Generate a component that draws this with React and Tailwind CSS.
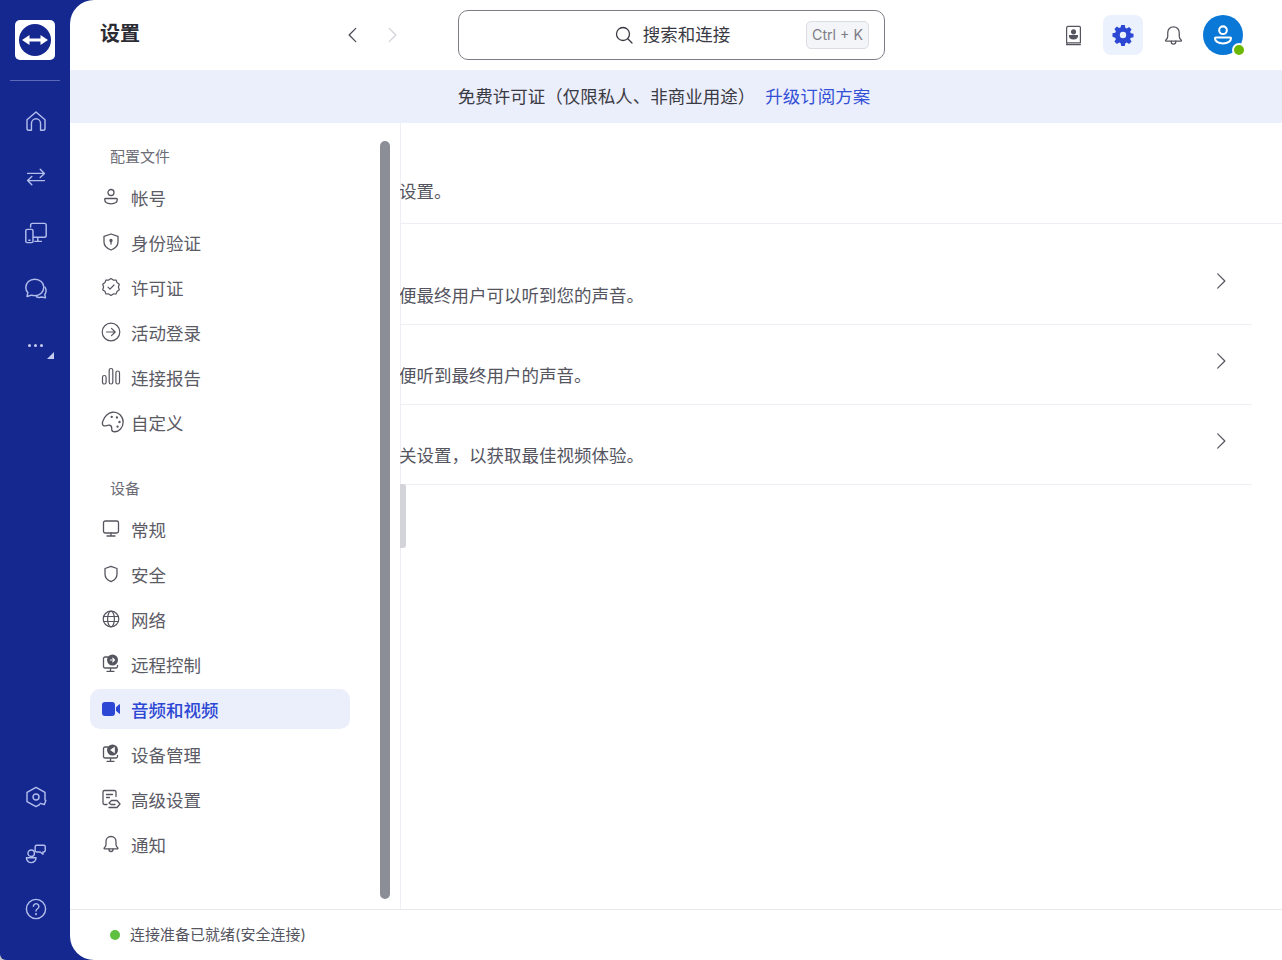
import React from "react";

const S = ({ size = 20, children, sw = 1.4, className = "" }) => (
  <svg width={size} height={size} viewBox="0 0 20 20" fill="none" stroke="currentColor" strokeWidth={sw} strokeLinecap="round" strokeLinejoin="round" className={className}>
    {children}
  </svg>
);

const Logo = () => (
  <svg width="40" height="40" viewBox="0 0 40 40">
    <rect width="40" height="40" rx="5" fill="#fff" />
    <circle cx="20" cy="20" r="16" fill="#14288f" />
    <path d="M7 20 14.500 15V18.600H25.500V15L33 20 25.500 25V21.400H14.500V25Z" fill="#fff" />
  </svg>
);

const railTop = [
  <S size={24} sw={1.2}><path d="M2.500 9 10 2.500 17.500 9v7.200a1.500 1.500 0 0 1-1.500 1.500h-2.200V12a3.800 3.800 0 0 0-7.600 0v5.700H4a1.500 1.500 0 0 1-1.500-1.500Z" /></S>,
  <S size={24} sw={1.2}><path d="M3 7h14M13.500 3.500 17 7l-3.500 3.500M17 13H3M6.500 9.500 3 13l3.500 3.500" /></S>,
  <S size={24} sw={1.2}><path d="M5.500 5V3.500A1.500 1.500 0 0 1 7 2h10a1.500 1.500 0 0 1 1.500 1.500V12a1.500 1.500 0 0 1-1.500 1.500H8M11.500 13.500V17M9 17h5.500" /><rect x="1.500" y="7" width="6" height="11" rx="1.200" /><path d="M4 16h1" /></S>,
  <S size={24} sw={1.2}><path d="M9 1.800c-4.200 0-7.500 3-7.500 6.900 0 1.700.7 3.200 1.700 4.300L2.500 16.300l3.800-1.200c.8.300 1.700.4 2.700.4 4.200 0 7.500-3 7.500-6.900S13.200 1.800 9 1.800Z" /><path d="M17.500 8.500c.6.900.9 1.900.9 3 0 1.200-.4 2.200-1.100 3.100l.6 2.800-3.200-.7c-1.400.5-3.200.4-4.500-.4" /></S>,
];

const railBottom = [
  <S size={24} sw={1.2}><path d="M17.500 12.500V6.200L10 2 2.500 6.200v7.600L10 18l3-1.700" /><circle cx="10" cy="10" r="2.500" /><path d="M18.200 12.800 17 16.300l-3.500-1" /></S>,
  <S size={24} sw={1.2}><circle cx="6" cy="10.200" r="2.700" /><path d="M2 14h8a4 4 0 0 1-8 0Z" /><path d="M10.500 3.500h6a1.200 1.200 0 0 1 1.200 1.200v3.300a1.200 1.200 0 0 1-1.200 1.200h-.700V11l-2.300-1.800h-3a1.200 1.200 0 0 1-1.200-1.200V4.700a1.200 1.200 0 0 1 1.200-1.200Z" /></S>,
  <S size={24} sw={1.2}><circle cx="10" cy="10" r="8" /><path d="M7.800 7.800a2.300 2.300 0 1 1 3.500 2c-.800.500-1.300 1-1.300 1.900" /><circle cx="10" cy="14.300" r=".3" /></S>,
];

const I = {
  user: <S sw={1.3}><circle cx="10" cy="5.500" r="3" /><path d="M4.500 11.500h11a.8.8 0 0 1 .8.800c0 2.500-2 4.500-6.300 4.500s-6.300-2-6.300-4.500a.8.8 0 0 1 .8-.8Z" /></S>,
  shieldLock: <S sw={1.3}><path d="M10 2 17 4.300v5.700c0 3.700-2.900 6.400-7 8-4.100-1.600-7-4.300-7-8V4.300Z" /><circle cx="10" cy="8.500" r="1" fill="currentColor" /><path d="M10 9.500v2.500" /></S>,
  badge: <S sw={1.2}><path d="m10 1.500 2.300 1.600 2.800-.1.900 2.600 2.300 1.700-.9 2.700.9 2.700-2.300 1.700-.9 2.600-2.800-.1L10 18.500l-2.300-1.600-2.800.1-.9-2.600-2.300-1.700.9-2.700-.9-2.700L4 5.600l.9-2.600 2.800.1Z" /><path d="m7 10.200 2 2 4-4.200" /></S>,
  arrowCircle: <S sw={1.2}><circle cx="10" cy="10" r="8.800" /><path d="M5.500 10h8.500M10.500 6.300l3.700 3.700-3.700 3.700" /></S>,
  bars: <S sw={1.2}><rect x="1.500" y="8.500" width="3.600" height="8.500" rx="1.800" /><rect x="8.200" y="1.500" width="3.600" height="15.500" rx="1.800" /><rect x="14.900" y="4" width="3.600" height="13" rx="1.800" /></S>,
  palette: <S size={26} sw={1} className="flex-none translate-x-[2px]"><path d="M9.500 2.500c4.700-.5 8.300 3.200 8.300 7.500s-3.200 7.500-6.500 7.500c-1.800 0-2.300-1-2.300-2 0-1.400.3-2.700-1.500-3-1.700-.3-3 .7-4.500.5C1.800 12.700 1.500 11 2.300 9c1-3 3.800-6.100 7.200-6.500Z" /><circle cx="9" cy="6" r=".4" fill="currentColor" /><circle cx="13" cy="6.500" r=".4" fill="currentColor" /><circle cx="15" cy="10" r=".4" fill="currentColor" /><circle cx="13.500" cy="13.500" r=".4" fill="currentColor" /></S>,
  monitor: <S sw={1.3}><rect x="2.500" y="2" width="15" height="12" rx="1.800" /><path d="M10 14v3M6 17h8" /></S>,
  shield: <S sw={1.3}><path d="M10 2.300 16 4.500v5.500c0 3.500-2.500 6.200-6 7.700-3.500-1.500-6-4.200-6-7.700V4.500Z" /></S>,
  globe: <S sw={1.2}><circle cx="10" cy="10" r="7.800" /><ellipse cx="10" cy="10" rx="3.400" ry="7.800" /><path d="M2.500 7.500h15M2.500 12.500h15" /></S>,
  remote: <S sw={1.3}><path d="M7 3H4a1.500 1.500 0 0 0-1.500 1.500v8A1.500 1.500 0 0 0 4 14h11a1.500 1.500 0 0 0 1.500-1.500v-1M9.500 14v3M6 17.300h7" /><circle cx="11.500" cy="6" r="5.500" fill="currentColor" stroke="none" /><path d="M9.300 6h4M11.700 4.200 13.500 6l-1.800 1.800" stroke="#fff" strokeWidth="1.100" /></S>,
  manage: <S sw={1.3}><path d="M7 3H4a1.500 1.500 0 0 0-1.500 1.500v8A1.500 1.500 0 0 0 4 14h11a1.500 1.500 0 0 0 1.500-1.500v-1M9.500 14v3M6 17.300h7" /><circle cx="11.500" cy="6" r="5.500" fill="currentColor" stroke="none" /><path d="M13.200 3.500 9.600 6l3.600 2.500Z" fill="#fff" stroke="#fff" strokeWidth=".8" /></S>,
  advanced: <S sw={1.3}><path d="M15 7.500V3A1.500 1.500 0 0 0 13.500 1.500H3.500A1.500 1.500 0 0 0 2 3v11a1.500 1.500 0 0 0 1.500 1.500H6M5.500 5.500h6M5.500 8.500h3" /><path d="M8 18.500h8l3-3.500-3-3.500h-5.500L8 14l2 1.500h4" /></S>,
  bell: <S sw={1.3}><path d="M10 2.500c-3 0-5 2.200-5 5v3.300c0 1.200-.8 2.300-1.800 3.200-.3.300-.1.800.3.800h13c.4 0 .6-.5.300-.8-1-.9-1.800-2-1.800-3.200V7.500c0-2.800-2-5-5-5Z" /><path d="M8 15v.5a2 2 0 0 0 4 0V15" /></S>,
  video: (
    <svg width="20" height="20" viewBox="0 0 20 20" fill="currentColor">
      <rect x="1" y="3" width="13" height="14" rx="3" />
      <path d="M15 8.200 18.300 5.300c.3-.3.700 0 .7.300v8.800c0 .4-.4.600-.7.300L15 11.800Z" />
    </svg>
  ),
};

const profile = [
  ["帐号", I.user],
  ["身份验证", I.shieldLock],
  ["许可证", I.badge],
  ["活动登录", I.arrowCircle],
  ["连接报告", I.bars],
  ["自定义", I.palette],
];
const device = [
  ["常规", I.monitor],
  ["安全", I.shield],
  ["网络", I.globe],
  ["远程控制", I.remote],
  ["音频和视频", I.video, true],
  ["设备管理", I.manage],
  ["高级设置", I.advanced],
  ["通知", I.bell],
];

const NavItem = ({ label, icon, active }) => (
  <div className={`flex h-[40px] mb-[5px] items-center rounded-[10px] pl-[11px] text-[17.5px] ${active ? "bg-[#ebeefb] font-medium text-[#2b47d4]" : "text-[#5b5b66]"}`}>
    <span className={`flex h-[20px] w-[20px] flex-none items-center justify-center ${active ? "text-[#2b47d4]" : "text-[#55555f]"}`}>{icon}</span>
    <span className="ml-[10px] mt-[4px]">{label}</span>
  </div>
);

const Row = ({ text }) => (
  <div className="mr-[30px] flex h-[80px] justify-between border-b border-[#eeeef4]">
    <div className="-ml-[1px] self-end whitespace-nowrap pb-[16px] text-[17.5px] leading-[24px] text-[#55555f]">{text}</div>
    <div className="mr-[20px] mt-[25px] text-[#55555f]">
      <S size={22} sw={1.1}><path d="M7 3.500 13.500 10 7 16.500" /></S>
    </div>
  </div>
);

export default function App() {
  return (
    <div className="h-[960px] w-[1282px] bg-[#c9c9c9]">
      <div className="flex h-[960px] w-[1282px] overflow-hidden rounded-bl-[6px] bg-[#14288f] font-['Inter','Noto_Sans_CJK_SC',sans-serif]">
        <aside className="flex w-[70px] flex-none flex-col items-center text-[#b3bdec]">
          <div className="mt-[20px]"><Logo /></div>
          <div className="mt-[20px] h-px w-[50px] bg-[#5b69b8]" />
          <div className="mt-[12px] flex flex-col">
            {railTop.map((ic, i) => (
              <div key={i} className="flex h-[56px] w-[70px] items-center justify-center pl-[1px]">{ic}</div>
            ))}
            <div className="relative flex h-[56px] w-[70px] items-center justify-center">
              <div className="flex gap-[3px]">
                <span className="h-[3px] w-[3px] rounded-full bg-[#c4ccf0]" />
                <span className="h-[3px] w-[3px] rounded-full bg-[#c4ccf0]" />
                <span className="h-[3px] w-[3px] rounded-full bg-[#c4ccf0]" />
              </div>
              <svg className="absolute left-[47px] top-[35px]" width="7" height="7" viewBox="0 0 7 7"><path d="M7 0v7H0Z" fill="#c4ccf0" /></svg>
            </div>
          </div>
          <div className="mb-[23px] mt-auto flex flex-col">
            {railBottom.map((ic, i) => (
              <div key={i} className="flex h-[56px] w-[70px] items-center justify-center pl-[1px]">{ic}</div>
            ))}
          </div>
        </aside>

        <main className="flex min-w-0 flex-1 flex-col overflow-hidden rounded-l-[24px] bg-white">
          <header className="flex h-[70px] flex-none items-center">
            <div className="-mt-[2px] ml-[30px] w-[232px] text-[20px] font-bold text-[#2b2b33]">设置</div>
            <div className="flex h-[40px] w-[40px] items-center justify-center pl-[1px] text-[#4e4e58]">
              <S size={22} sw={1.200}><path d="M12.500 4 6.500 10l6 6" /></S>
            </div>
            <div className="flex h-[40px] w-[40px] items-center justify-center text-[#d3d4da]">
              <S size={22} sw={1.200}><path d="M7.500 4l6 6-6 6" /></S>
            </div>
            <div className="relative ml-[46px] flex h-[50px] w-[427px] items-center justify-center rounded-[10px] border border-[#7d7d87] text-[#3a3a44]">
              <div className="flex items-center pl-[1px]">
                <S size={20} sw={1.300}><circle cx="9" cy="9" r="6.500" /><path d="m14 14 4 4" /></S>
                <span className="ml-[9px] text-[17.5px]">搜索和连接</span>
              </div>
              <div className="absolute right-[15px] top-[10px] flex h-[28px] w-[63px] items-center justify-center rounded-[5px] border border-[#dcdde3] bg-[#f4f5f8] text-[14.2px] text-[#7d7d87]">Ctrl + K</div>
            </div>
            <div className="ml-auto mr-[39px] flex items-center gap-[10px]">
              <div className="flex h-[40px] w-[40px] items-center justify-center text-[#55555f]">
                <S size={23} sw={1.050}><path d="M4 16V3.500A1.500 1.500 0 0 1 5.500 2H15a1 1 0 0 1 1 1v13.500H5.200A1.300 1.300 0 0 0 4 18h12" /><circle cx="10" cy="6.800" r="1.700" fill="currentColor" /><path d="M6.500 10h7c0 2-1.300 3-3.500 3s-3.500-1-3.500-3Z" fill="currentColor" /></S>
              </div>
              <div className="flex h-[40px] w-[40px] items-center justify-center rounded-[8px] bg-[#ebf2fd] text-[#2b47d4]">
                <svg width="22" height="22" viewBox="0 0 22 22"><path fillRule="evenodd" fill="currentColor" d="M9.200 1h3.600l.5 2.700 1.500.7 2.300-1.500 2.500 2.500-1.500 2.300.7 1.500 2.700.5v3.600l-2.700.5-.7 1.500 1.500 2.300-2.500 2.500-2.300-1.500-1.500.7-.5 2.700H9.200l-.5-2.700-1.500-.7-2.300 1.500-2.500-2.500 1.500-2.300-.7-1.500L.5 12.800V9.200l2.700-.5.700-1.500-1.500-2.300 2.500-2.500 2.300 1.500 1.500-.7ZM11 7.800a3.200 3.200 0 1 0 0 6.400 3.200 3.200 0 0 0 0-6.400Z" /></svg>
              </div>
              <div className="flex h-[40px] w-[40px] items-center justify-center text-[#55555f]">
                <S size={23} sw={1.100}><path d="M10 2.500c-3 0-5 2.200-5 5v3.300c0 1.200-.8 2.300-1.800 3.200-.3.300-.1.800.3.800h13c.4 0 .6-.5.300-.8-1-.9-1.800-2-1.800-3.200V7.500c0-2.800-2-5-5-5Z" /><path d="M8 15v.5a2 2 0 0 0 4 0V15" /></S>
              </div>
              <div className="relative flex h-[40px] w-[40px] items-center justify-center rounded-full bg-[#0a78d6] text-white">
                <S size={24} sw={1.700}><circle cx="10" cy="6" r="3.200" /><path d="M4 12h12c.4 0 .7.300.7.700 0 2.300-2.500 4.300-6.700 4.300s-6.700-2-6.700-4.300c0-.4.300-.7.700-.7Z" /></S>
                <span className="absolute left-[29px] top-[28px] h-[14px] w-[14px] rounded-full border-2 border-white bg-[#6cb800]" />
              </div>
            </div>
          </header>

          <div className="flex h-[53px] flex-none items-center justify-center bg-[#ebeefb] pr-[24px] pt-[2px] text-[17.5px]">
            <span className="text-[#3a3a44]">免费许可证（仅限私人、非商业用途）</span>
            <span className="ml-[10px] text-[#3350d6]">升级订阅方案</span>
          </div>

          <div className="flex min-h-0 flex-1">
            <div className="flex w-[330px] flex-none">
              <nav className="ml-[20px] w-[260px] pt-[22px]">
                <div className="mb-[8px] ml-[20px] h-[24px] text-[15px] leading-[24px] text-[#6d6d77]">配置文件</div>
                {profile.map(([l, ic]) => <NavItem key={l} label={l} icon={ic} />)}
                <div className="mb-[8px] ml-[20px] mt-[35px] h-[24px] text-[15px] leading-[24px] text-[#6d6d77]">设备</div>
                {device.map(([l, ic, a]) => <NavItem key={l} label={l} icon={ic} active={a} />)}
              </nav>
              <div className="ml-[30px] mt-[18px] h-[758px] w-[10px] rounded-[5px] bg-[#8b8e96]" />
            </div>
            <section className="relative min-w-0 flex-1 overflow-hidden shadow-[inset_1px_0_0_#eeeef4]">
              <div className="flex h-[101px] items-end border-b border-[#eeeef4] pb-[19px] text-[17.5px] leading-[24px] text-[#55555f]"><span className="-ml-[1px]">设置。</span></div>
              <div className="pt-[21px]">
                <Row text="便最终用户可以听到您的声音。" />
                <Row text="便听到最终用户的声音。" />
                <Row text="关设置，以获取最佳视频体验。" />
              </div>
              <div className="absolute left-0 top-[361px] h-[64px] w-[6px] rounded-r-[3px] bg-[#d3d4da]" />
            </section>
          </div>

          <footer className="flex h-[51px] flex-none items-center border-t border-[#e8e8ec] pl-[40px] text-[15px] text-[#55555f]">
            <span className="h-[10px] w-[10px] rounded-full bg-[#5fbf3f]" />
            <span className="ml-[10px]">连接准备已就绪(安全连接)</span>
          </footer>
        </main>
      </div>
    </div>
  );
}
